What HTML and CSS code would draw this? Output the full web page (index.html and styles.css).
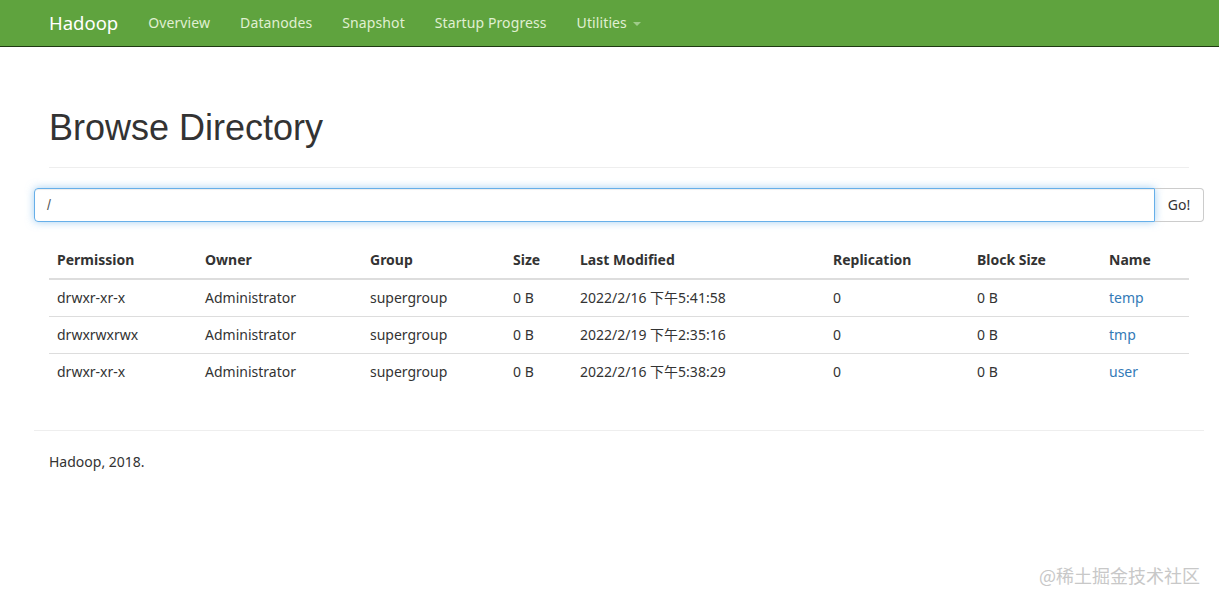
FILE: index.html
```html
<!DOCTYPE html>
<html>
<head>
<meta charset="utf-8">
<link rel="stylesheet" href="styles.css">
</head>
<body>
<header class="navbar">
  <div class="nav-inner">
    <span class="brand">Hadoop</span>
    <ul class="nav-links">
      <li>Overview</li>
      <li>Datanodes</li>
      <li>Snapshot</li>
      <li>Startup Progress</li>
      <li>Utilities <span class="caret"></span></li>
    </ul>
  </div>
</header>
<main class="container">
  <div class="page-header"><h1>Browse Directory</h1></div>
  <div class="row">
    <div class="input-group">
      <div class="path-input">/</div>
      <div class="go-btn">Go!</div>
    </div>
  </div>
  <table class="listing">
    <thead>
      <tr>
        <th class="c1">Permission</th><th class="c2">Owner</th><th class="c3">Group</th><th class="c4">Size</th><th class="c5">Last Modified</th><th class="c6">Replication</th><th class="c7">Block Size</th><th class="c8">Name</th>
      </tr>
    </thead>
    <tbody>
      <tr><td>drwxr-xr-x</td><td>Administrator</td><td>supergroup</td><td>0 B</td><td>2022/2/16 下午5:41:58</td><td>0</td><td>0 B</td><td><a class="link">temp</a></td></tr>
      <tr><td>drwxrwxrwx</td><td>Administrator</td><td>supergroup</td><td>0 B</td><td>2022/2/19 下午2:35:16</td><td>0</td><td>0 B</td><td><a class="link">tmp</a></td></tr>
      <tr><td>drwxr-xr-x</td><td>Administrator</td><td>supergroup</td><td>0 B</td><td>2022/2/16 下午5:38:29</td><td>0</td><td>0 B</td><td><a class="link">user</a></td></tr>
    </tbody>
  </table>
</main>
<footer class="footer">
  <p>Hadoop, 2018.</p>
</footer>
<div class="watermark">@稀土掘金技术社区</div>
</body>
</html>
```
FILE: styles.css
```css
* { box-sizing: border-box; }
html, body { margin: 0; padding: 0; background: #fff; }
body {
  font-family: "Noto Sans", "Noto Sans CJK SC", sans-serif;
  font-size: 14px;
  color: #333;
  width: 1219px;
  height: 603px;
  overflow: hidden;
  position: relative;
}
.navbar {
  height: 47px;
  background: #5fa33e;
  border-bottom: 1px solid #1f3a12;
}
.nav-inner {
  margin-left: 34px;
  width: 1170px;
  padding: 0 15px;
  display: flex;
  align-items: center;
  height: 46px;
}
.brand {
  font-size: 18.5px;
  color: #fff;
  margin-right: 15px;
  line-height: 44px;
}
.nav-links {
  list-style: none;
  margin: 0;
  padding: 0;
  display: flex;
}
.nav-links li {
  color: #e0f0d2;
  font-size: 14px;
  letter-spacing: 0.1px;
  padding: 0 15px;
  line-height: 42px;
}
.caret {
  display: inline-block;
  width: 0; height: 0;
  border-top: 4px solid #9fcb8a;
  border-left: 4px solid transparent;
  border-right: 4px solid transparent;
  vertical-align: middle;
  margin-left: 2px;
}
.container {
  margin-left: 34px;
  width: 1170px;
  padding: 0 15px;
}
.page-header {
  margin: 61px 0 20px;
  padding-bottom: 9px;
  border-bottom: 1px solid #eee;
}
.page-header h1 {
  margin: 20px 0 10px;
  font-family: "Liberation Sans", Arial, sans-serif;
  font-weight: 400;
  font-size: 36px;
  line-height: 40px;
  color: #333;
}
.row { margin: 0 -15px; }
.input-group { display: flex; height: 34px; }
.path-input {
  flex: 1;
  border: 1px solid #66afe9;
  border-radius: 4px 0 0 4px;
  box-shadow: inset 0 1px 1px rgba(0,0,0,.075), 0 0 8px rgba(102,175,233,.6);
  padding: 6px 12px;
  line-height: 20px;
  font-family: "Liberation Sans", Arial, sans-serif;
  color: #555;
}
.go-btn {
  width: 49px;
  border: 1px solid #ccc;
  border-left: none;
  border-radius: 0 4px 4px 0;
  text-align: center;
  line-height: 32px;
  color: #333;
}
.listing {
  width: 100%;
  border-collapse: collapse;
  margin-top: 20px;
}
.listing th {
  text-align: left;
  font-weight: 700;
  padding: 8px;
  line-height: 20px;
  border-bottom: 2px solid #ddd;
  color: #333;
}
.listing td {
  padding: 8px;
  line-height: 20px;
  border-top: 1px solid #ddd;
}
.listing tbody tr:first-child td { border-top: none; }
.c1 { width: 148px; }
.c2 { width: 165px; }
.c3 { width: 143px; }
.c4 { width: 67px; }
.c5 { width: 253px; }
.c6 { width: 144px; }
.c7 { width: 132px; }
.link { color: #337ab7; text-decoration: none; }
.footer {
  margin: 40px 0 0 34px;
  width: 1170px;
  border-top: 1px solid #eee;
  padding: 21px 15px 19px;
}
.footer p { margin: 0 0 10px; line-height: 20px; }
.watermark {
  position: absolute;
  right: 19px;
  top: 563px;
  font-size: 18px;
  color: #c8c8c8;
  font-family: "Noto Sans CJK SC", sans-serif;
  line-height: 24px;
}
```
